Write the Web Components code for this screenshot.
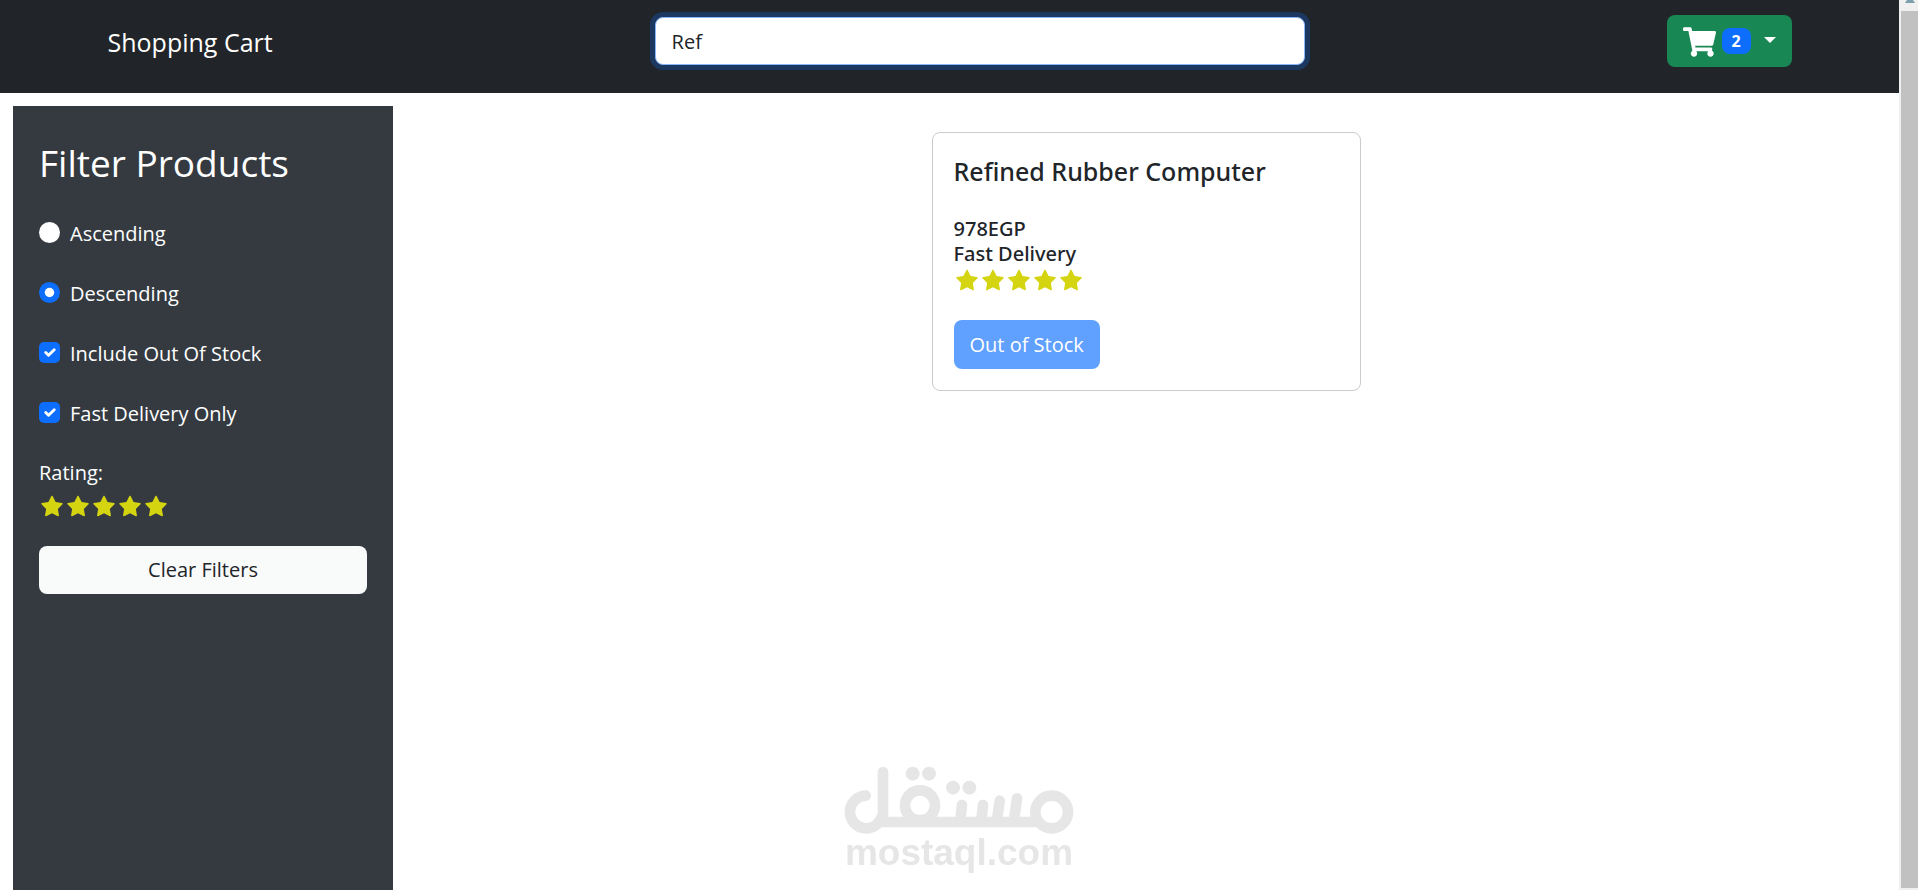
<!DOCTYPE html>
<html lang="en">
<head>
<meta charset="utf-8">
<meta name="viewport" content="width=device-width, initial-scale=1">
<title>Shopping Cart</title>
<style>
  html, body { margin: 0; height: 100%; }
  body { background: #fff; color: #212529; font-family: "Open Sans", "Noto Sans", sans-serif; font-size: 20px; line-height: 30px; }
</style>
</head>
<body>
<shop-app></shop-app>
<script>
const define = (name, html, setup) => {
  const template = document.createElement('template');
  template.innerHTML = '<style>*{box-sizing:border-box}</style>' + html;
  customElements.define(name, class extends HTMLElement {
    constructor() {
      super();
      this.attachShadow({ mode: 'open' }).append(template.content.cloneNode(true));
    }
    connectedCallback() { if (setup) setup(this, this.shadowRoot); }
  });
};

define('star-rating', `
  <style>
    :host { display: flex; height: 26px; color: #d4d411; }
    svg { width: 26px; height: 26px; fill: currentColor; display: block; }
  </style>`, (host, root) => {
  const star = '<svg viewBox="0 0 1024 1024" aria-hidden="true"><path d="M908.1 353.1l-253.9-36.9L540.7 86.1c-3.1-6.3-8.2-11.4-14.5-14.5-15.8-7.8-35-1.3-42.9 14.5L369.8 316.2l-253.9 36.9c-7 1-13.4 4.3-18.3 9.3a32.05 32.05 0 0 0 .6 45.3l183.7 179.1-43.4 252.9a31.95 31.95 0 0 0 46.4 33.7L512 754l227.1 119.4c6.2 3.3 13.4 4.4 20.3 3.2 17.4-3 29.1-19.5 26.1-36.9l-43.4-252.9 183.7-179.1c5-4.9 8.3-11.3 9.3-18.3 2.7-17.5-9.5-33.7-27-36.3z"/></svg>';
  root.querySelectorAll('svg').forEach(s => s.remove());
  root.lastElementChild.insertAdjacentHTML('afterend', star.repeat(Number(host.getAttribute('value'))));
});

define('cart-button', `
  <style>
    :host { display: block; flex: none; }
    button { display: flex; align-items: center; height: 52px; padding: 0 16px; border: 0; border-radius: 8px; background: #198754; color: #fff; font: inherit; cursor: pointer; }
    .cart { width: 33px; height: 30px; fill: #fff; margin-top: 2px; }
    .badge { width: 29px; height: 26px; margin: 0 13px 0 6px; border-radius: 8px; background: #0d6efd; font-size: 16px; line-height: 26px; font-weight: 700; text-align: center; }
    .caret { width: 12px; height: 6px; fill: #fff; margin-bottom: 3px; }
  </style>
  <button type="button" aria-haspopup="true">
    <svg class="cart" viewBox="0 0 576 512" aria-hidden="true"><path d="M528.12 301.319l47.273-208C578.806 78.301 567.391 64 551.99 64H159.208l-9.166-44.81C147.758 8.021 137.93 0 126.529 0H24C10.745 0 0 10.745 0 24v16c0 13.255 10.745 24 24 24h69.883l70.248 343.435C147.325 417.1 136 435.222 136 456c0 30.928 25.072 56 56 56s56-25.072 56-56c0-15.674-6.447-29.835-16.824-40h209.647C430.447 426.165 424 440.326 424 456c0 30.928 25.072 56 56 56s56-25.072 56-56c0-22.172-12.888-41.332-31.579-50.405l5.517-24.276c3.413-15.018-8.002-29.319-23.403-29.319H218.117l-6.545-32h293.145c11.206 0 20.92-7.754 23.403-18.681z"/></svg>
    <span class="badge"><slot></slot></span>
    <svg class="caret" viewBox="0 0 12 6" aria-hidden="true"><path d="M0 0h12L6 6z"/></svg>
  </button>`);

define('shop-header', `
  <style>
    :host { display: block; height: 93px; padding: 15px 16px 0; background: #212529; }
    nav { display: flex; align-items: center; justify-content: space-between; max-width: 1684px; margin: 0 auto; }
    a { margin-right: 20px; padding-top: 2px; color: #fff; font-size: 25px; line-height: 40px; text-decoration: none; white-space: nowrap; }
    input { flex: 0 1 650px; min-width: 0; height: 48px; padding: 0 16px; border: 1px solid #86b7fe; border-radius: 8px; outline: 0; box-shadow: 0 0 0 5px #1c3860; background: #fff; color: #212529; font: inherit; }
  </style>
  <nav>
    <a href="#">Shopping Cart</a>
    <input type="text" aria-label="Search a product" value="Ref">
    <cart-button>2</cart-button>
  </nav>`);

define('filter-option', `
  <style>
    :host { display: block; }
    label { display: flex; align-items: center; gap: 10px; height: 30px; }
    input { appearance: none; flex: none; width: 21px; height: 21px; margin: 0 0 3px; background: #fff center / 90% no-repeat; }
    input[type=radio] { border-radius: 50%; }
    input[type=checkbox] { border-radius: 5px; }
    input:checked { background-color: #0d6efd; }
    input[type=radio]:checked { background-image: url("data:image/svg+xml,%3csvg xmlns='http://www.w3.org/2000/svg' viewBox='-4 -4 8 8'%3e%3ccircle r='2' fill='%23fff'/%3e%3c/svg%3e"); }
    input[type=checkbox]:checked { background-image: url("data:image/svg+xml,%3csvg xmlns='http://www.w3.org/2000/svg' viewBox='0 0 20 20'%3e%3cpath fill='none' stroke='%23fff' stroke-linecap='round' stroke-linejoin='round' stroke-width='3' d='m6 10 3 3 6-6'/%3e%3c/svg%3e"); }
  </style>
  <label><input><span><slot></slot></span></label>`, (host, root) => {
  const input = root.querySelector('input');
  input.type = host.getAttribute('type');
  input.name = host.getAttribute('name');
  input.checked = host.hasAttribute('checked');
});

define('filter-panel', `
  <style>
    :host { display: flex; flex-direction: column; align-items: stretch; box-sizing: border-box; padding: 26px; background: #343a40; color: #fff; }
    h1 { margin: 7px 0 32px; font-size: 37px; line-height: 48px; font-weight: 400; }
    .options { display: grid; gap: 30px; }
    .rating { margin: 29px 0 26px; }
    star-rating { margin-top: 6px; }
    button { height: 48px; border: 0; border-radius: 8px; background: #f9fafa; color: #212529; font: inherit; cursor: pointer; }
  </style>
  <h1>Filter Products</h1>
  <div class="options">
    <filter-option type="radio" name="order">Ascending</filter-option>
    <filter-option type="radio" name="order" checked>Descending</filter-option>
    <filter-option type="checkbox" name="stock" checked>Include Out Of Stock</filter-option>
    <filter-option type="checkbox" name="fast" checked>Fast Delivery Only</filter-option>
  </div>
  <div class="rating">Rating:<star-rating value="5"></star-rating></div>
  <button type="button">Clear Filters</button>`);

define('product-card', `
  <style>
    :host { display: block; box-sizing: border-box; width: 429px; padding: 21px; border: 1px solid #ccc; border-radius: 8px; background: #fff; }
    h2, .details { font-family: "Noto Sans", "Open Sans", sans-serif; font-weight: 500; }
    h2 { margin: 0 0 28px; font-size: 25px; line-height: 34px; }
    .details { margin-bottom: 26px; line-height: 25px; }
    star-rating { margin-top: 2px; }
    button { display: block; height: 49px; padding: 0 16px; border: 0; border-radius: 8px; background: #60a0fe; color: #fff; font: inherit; }
  </style>
  <h2><slot name="title"></slot></h2>
  <div class="details">
    <div><slot name="price"></slot></div>
    <div><slot name="delivery"></slot></div>
    <star-rating value="5"></star-rating>
  </div>
  <button type="button" disabled>Out of Stock</button>`);

define('site-watermark', `
  <style>
    :host { display: block; width: 230px; color: #e6e6e6; pointer-events: none; }
    svg { display: block; width: 230px; height: 72px; fill: none; stroke: currentColor; stroke-width: 32; stroke-linecap: round; }
    .dots { fill: currentColor; stroke: none; }
    div { font: 700 37px/34px "Liberation Sans", Arial, sans-serif; text-align: center; }
  </style>
  <svg viewBox="42 40 690 216" role="img" aria-label="mostaql">
    <path d="M107 135a49 49 0 1 0 49 62"/>
    <path d="M159 64V200M145 214H612M396 163l-5 45M459 163l-5 45M509 150l-8 58M561 143l-9 65"/>
    <circle cx="270" cy="164" r="45"/>
    <circle cx="665" cy="184" r="49"/>
    <g class="dots"><circle cx="248" cy="69" r="21"/><circle cx="297" cy="69" r="21"/><circle cx="369" cy="111" r="21"/><circle cx="418" cy="111" r="21"/></g>
  </svg>
  <div>mostaql.com</div>`);

define('scroll-track', `
  <style>
    :host { display: flex; flex-direction: column; padding: 0 0 2px 2px; background: #f0f0f0; }
    svg { display: block; width: 17px; height: 11px; flex: none; fill: #7c9fae; }
    div { flex: 1; background: #c1c1c1; }
  </style>
  <svg viewBox="0 0 17 11" aria-hidden="true"><path d="M6 0h6l2 3H4z"/></svg>
  <div></div>`);

define('shop-app', `
  <style>
    :host { display: grid; grid-template-columns: minmax(0, 1fr) 19px; min-height: 100%; }
    .page { display: flex; flex-direction: column; }
    main { flex: 1; display: flex; padding: 13px 0 0 13px; }
    filter-panel { flex: 0 0 380px; }
    .products { flex: 1; display: flex; flex-wrap: wrap; align-items: flex-start; justify-content: center; padding: 26px; }
    site-watermark { position: fixed; left: 50%; bottom: 20px; margin-left: -115px; }
  </style>
  <div class="page">
    <shop-header></shop-header>
    <main>
      <filter-panel></filter-panel>
      <section class="products">
        <product-card>
          <span slot="title">Refined Rubber Computer</span>
          <span slot="price">978EGP</span>
          <span slot="delivery">Fast Delivery</span>
        </product-card>
      </section>
    </main>
  </div>
  <scroll-track></scroll-track>
  <site-watermark></site-watermark>`);
</script>
</body>
</html>
